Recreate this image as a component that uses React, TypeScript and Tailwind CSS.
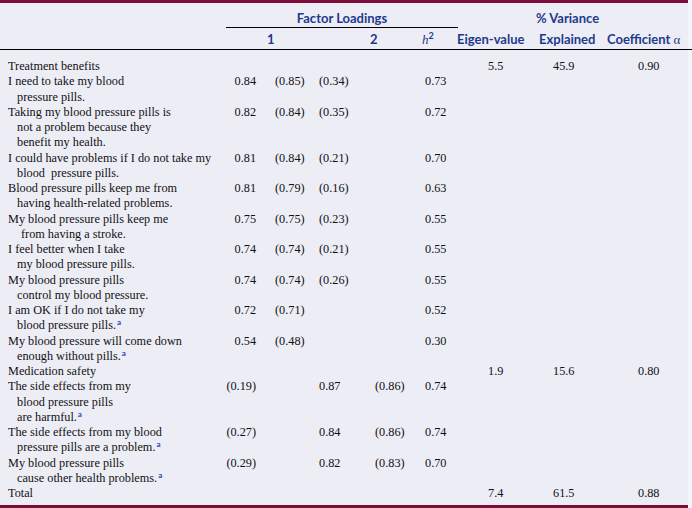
import React from "react";

type Row = {
  label: React.ReactNode[];
  c1?: string;
  c2?: string;
  c3?: string;
  c4?: string;
  h?: string;
  eig?: string;
  exp?: string;
  coef?: string;
  extraIndent?: boolean;
};

const Sup = () => (
  <sup className="text-[8px] font-bold text-[#2b3fc0] top-[-4px] ml-[1px] font-['Lato',sans-serif]">a</sup>
);

const rows: Row[] = [
  { label: ["Treatment benefits"], eig: "5.5", exp: "45.9", coef: "0.90" },
  { label: ["I need to take my blood", "pressure pills."], c1: "0.84", c2: "(0.85)", c3: "(0.34)", h: "0.73" },
  {
    label: ["Taking my blood pressure pills is", "not a problem because they", "benefit my health."],
    c1: "0.82",
    c2: "(0.84)",
    c3: "(0.35)",
    h: "0.72",
  },
  {
    label: ["I could have problems if I do not take my", "blood  pressure pills."],
    c1: "0.81",
    c2: "(0.84)",
    c3: "(0.21)",
    h: "0.70",
  },
  {
    label: ["Blood pressure pills keep me from", "having health-related problems."],
    c1: "0.81",
    c2: "(0.79)",
    c3: "(0.16)",
    h: "0.63",
  },
  {
    label: ["My blood pressure pills keep me", "from having a stroke."],
    c1: "0.75",
    c2: "(0.75)",
    c3: "(0.23)",
    h: "0.55",
    extraIndent: true,
  },
  { label: ["I feel better when I take", "my blood pressure pills."], c1: "0.74", c2: "(0.74)", c3: "(0.21)", h: "0.55" },
  { label: ["My blood pressure pills", "control my blood pressure."], c1: "0.74", c2: "(0.74)", c3: "(0.26)", h: "0.55" },
  {
    label: ["I am OK if I do not take my", <>blood pressure pills.<Sup /></>],
    c1: "0.72",
    c2: "(0.71)",
    h: "0.52",
  },
  {
    label: ["My blood pressure will come down", <>enough without pills.<Sup /></>],
    c1: "0.54",
    c2: "(0.48)",
    h: "0.30",
  },
  { label: ["Medication safety"], eig: "1.9", exp: "15.6", coef: "0.80" },
  {
    label: ["The side effects from my", "blood pressure pills", <>are harmful.<Sup /></>],
    c1: "(0.19)",
    c3: "0.87",
    c4: "(0.86)",
    h: "0.74",
  },
  {
    label: ["The side effects from my blood", <>pressure pills are a problem.<Sup /></>],
    c1: "(0.27)",
    c3: "0.84",
    c4: "(0.86)",
    h: "0.74",
  },
  {
    label: ["My blood pressure pills", <>cause other health problems.<Sup /></>],
    c1: "(0.29)",
    c3: "0.82",
    c4: "(0.83)",
    h: "0.70",
  },
  { label: ["Total"], eig: "7.4", exp: "61.5", coef: "0.88" },
];

export default function App() {
  return (
    <div className="w-[692px] h-[508px] bg-[#f4f4f9] flex flex-col">
      <div className="w-[688px] h-[3px] bg-[#7d0c3b]" />
      <div className="w-[688px] bg-[#ededf6] text-[#1e3a8c] font-bold text-[13px] leading-[16px] font-['Lato',sans-serif]">
        <div className="flex h-[25px]">
          <div className="w-[226px]" />
          <div className="w-[232px] h-[25px] text-center border-b border-black pt-[7px]">Factor Loadings</div>
          <div className="pl-[78px] pt-[7px]">% Variance</div>
        </div>
        <div className="flex pt-[3px] h-[21px]">
          <div className="w-[226px]" />
          <div className="w-[144px] pl-[41px]">1</div>
          <div className="w-[52px]">2</div>
          <div className="w-[35px]">
            <span className="italic font-normal font-['Liberation_Serif',serif]">h</span>
            <sup className="text-[9px] top-[-5px]">2</sup>
          </div>
          <div className="w-[82px]">Eigen-value</div>
          <div className="w-[68px]">Explained</div>
          <div className="whitespace-nowrap">
            Coefficient <span className="font-normal font-['Liberation_Serif',serif]">α</span>
          </div>
        </div>
      </div>
      <div className="w-[692px] h-px bg-black" />
      <div className="w-[688px] bg-[#ededf6] flex-1 pt-[9px] text-[12.25px] leading-[15.25px] text-[#111] font-['Liberation_Serif',serif]">
        {rows.map((r, i) => (
          <div key={i} className="grid grid-cols-[226px_30px_63px_56px_50px_63px_65px_85px_50px]">
            <div className="pl-[8px]">
              {r.label.map((l, j) => (
                <div
                  key={j}
                  className={"whitespace-pre " + (j === 0 ? "" : r.extraIndent ? "pl-[13px]" : "pl-[9px]")}
                >
                  {l}
                </div>
              ))}
            </div>
            <div className="text-right">{r.c1 ?? ""}</div>
            <div className="pl-[19px]">{r.c2 ?? ""}</div>
            <div>{r.c3 ?? ""}</div>
            <div>{r.c4 ?? ""}</div>
            <div>{r.h ?? ""}</div>
            <div>{r.eig ?? ""}</div>
            <div>{r.exp ?? ""}</div>
            <div>{r.coef ?? ""}</div>
          </div>
        ))}
      </div>
      <div className="w-[688px] h-[3px] bg-[#7d0c3b]" />
    </div>
  );
}
